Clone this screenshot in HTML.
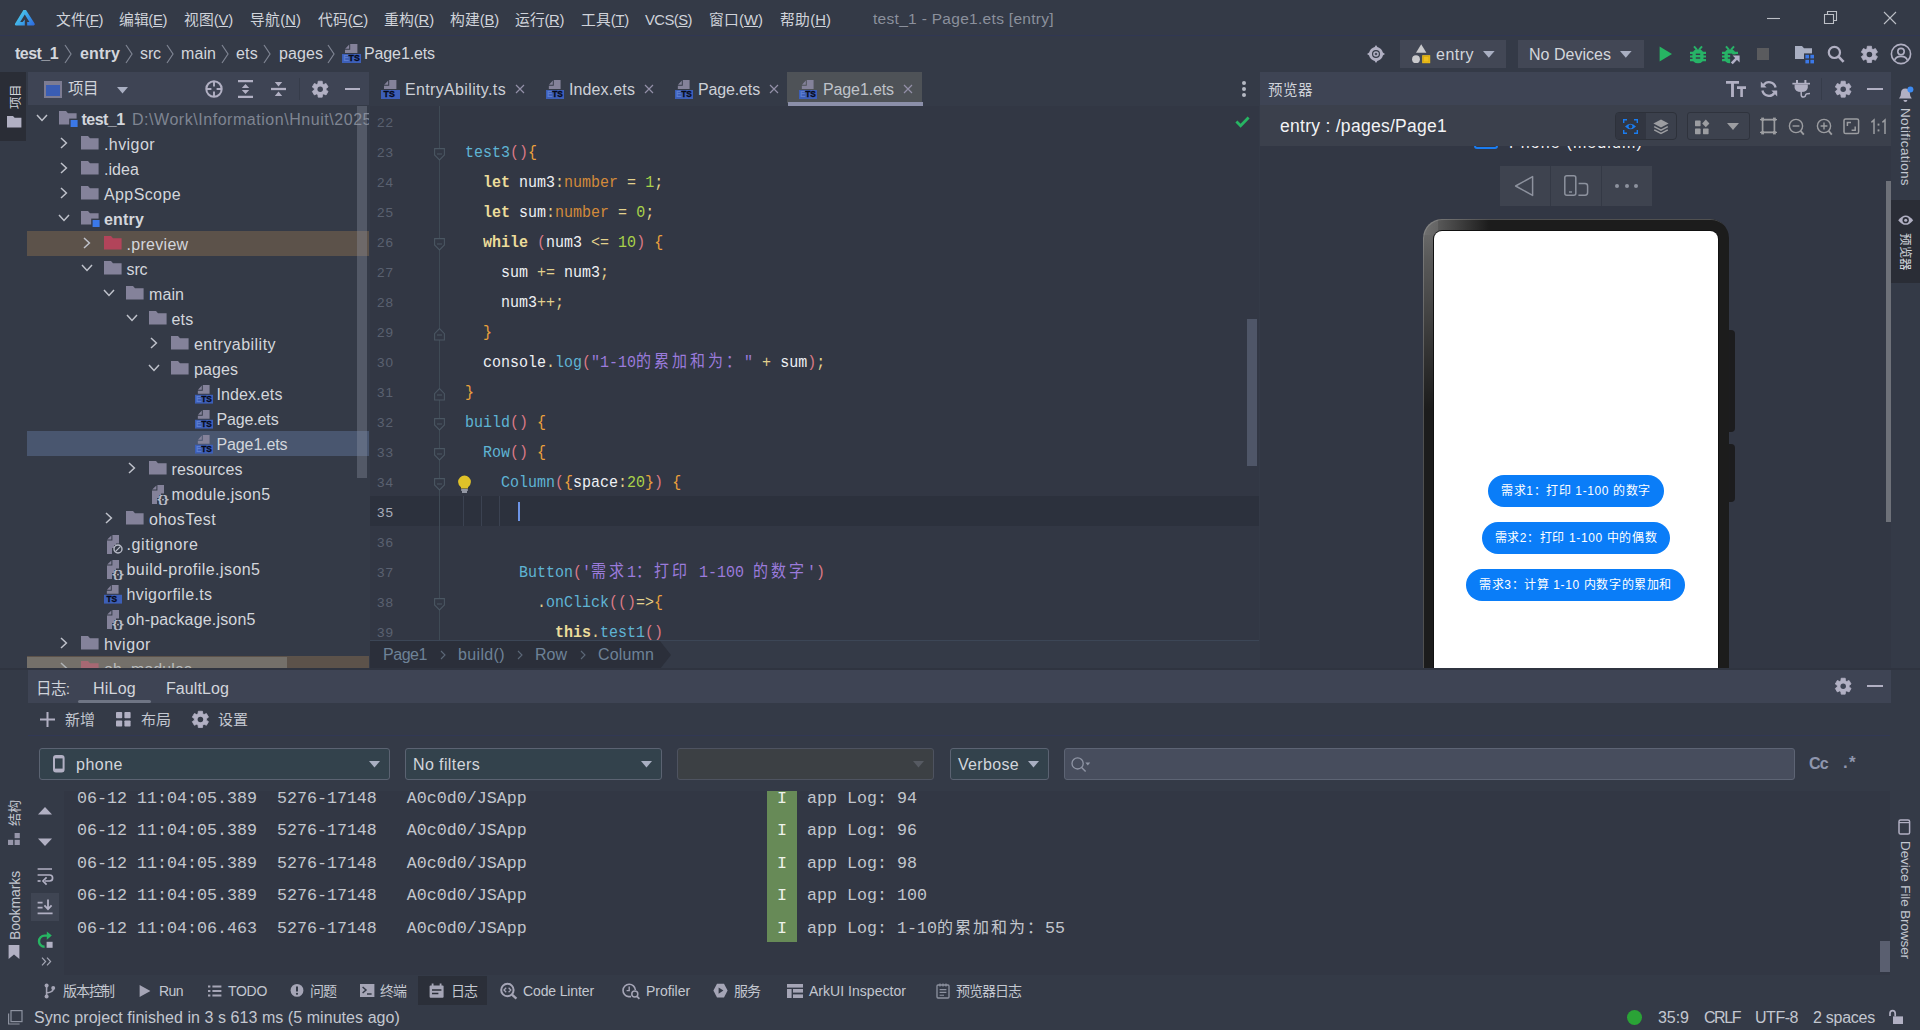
<!DOCTYPE html>
<html lang="zh-CN"><head><meta charset="utf-8"><title>test_1 - Page1.ets [entry]</title>
<style>
*{box-sizing:border-box;margin:0;padding:0}
html,body{width:1920px;height:1030px;overflow:hidden;background:#343a47;font-family:"Liberation Sans",sans-serif;color:#d3d6dc;font-size:16px}
.a{position:absolute}
.t{position:absolute;white-space:nowrap;line-height:20px;height:20px}
svg{position:absolute;overflow:visible}
.clip{position:absolute;overflow:hidden}
.m{font-family:"Liberation Mono",monospace}
.cj{font-size:15px;letter-spacing:3px}
.cj2{font-size:16px;letter-spacing:2px}
</style></head><body>
<div class="a" style="left:0px;top:0px;width:1920px;height:36px;background:#343a47;"></div>
<div class="a" style="left:0px;top:35px;width:1920px;height:1px;background:#303753;"></div>
<svg style="left:14px;top:9px;" width="22" height="18" viewBox="0 0 22 18" preserveAspectRatio="none"><defs><linearGradient id="lg1" x1="0" y1="0.2" x2="1" y2="0.8"><stop offset="0" stop-color="#52d6e8"/><stop offset="0.55" stop-color="#3aa0e8"/><stop offset="1" stop-color="#2f6fe0"/></linearGradient></defs>
<path d="M9.4 1L12 1L20.6 14.6Q21.4 16.4 19.6 16.4L13.2 16.4L13.2 13L15.4 13L10.8 5.6L6.2 13L8.6 13L10.8 10.4L10.8 16.4L2 16.4Q0.4 16.4 1 14.8Z" fill="url(#lg1)"/></svg>
<div class="t " style="letter-spacing:-0.38px;left:56px;top:9.5px;font-size:14.8px;color:#d0d3da;">文件(<u>F</u>)</div>
<div class="t " style="letter-spacing:-0.35px;left:119px;top:9.5px;font-size:14.8px;color:#d0d3da;">编辑(<u>E</u>)</div>
<div class="t " style="letter-spacing:-0.15px;left:184px;top:9.5px;font-size:14.8px;color:#d0d3da;">视图(<u>V</u>)</div>
<div class="t " style="letter-spacing:0.09px;left:250px;top:9.5px;font-size:14.8px;color:#d0d3da;">导航(<u>N</u>)</div>
<div class="t " style="letter-spacing:-0.11px;left:318px;top:9.5px;font-size:14.8px;color:#d0d3da;">代码(<u>C</u>)</div>
<div class="t " style="letter-spacing:-0.11px;left:384px;top:9.5px;font-size:14.8px;color:#d0d3da;">重构(<u>R</u>)</div>
<div class="t " style="letter-spacing:-0.15px;left:450px;top:9.5px;font-size:14.8px;color:#d0d3da;">构建(<u>B</u>)</div>
<div class="t " style="letter-spacing:-0.31px;left:515px;top:9.5px;font-size:14.8px;color:#d0d3da;">运行(<u>R</u>)</div>
<div class="t " style="letter-spacing:-0.18px;left:581px;top:9.5px;font-size:14.8px;color:#d0d3da;">工具(<u>T</u>)</div>
<div class="t " style="letter-spacing:-0.53px;left:645px;top:9.5px;font-size:14.8px;color:#d0d3da;">VCS(<u>S</u>)</div>
<div class="t " style="letter-spacing:0.03px;left:709px;top:9.5px;font-size:14.8px;color:#d0d3da;">窗口(<u>W</u>)</div>
<div class="t " style="letter-spacing:0.09px;left:780px;top:9.5px;font-size:14.8px;color:#d0d3da;">帮助(<u>H</u>)</div>
<div class="t " style="letter-spacing:0.30px;left:873px;top:9px;font-size:15.5px;color:#8b909c;">test_1 - Page1.ets [entry]</div>
<svg style="left:1766px;top:10px;" width="16" height="16" viewBox="0 0 16 16" preserveAspectRatio="none"><path d="M1 8.5H14" stroke="#bcbfc6" stroke-width="1.1" fill="none"/></svg>
<svg style="left:1823px;top:10px;" width="16" height="16" viewBox="0 0 16 16" preserveAspectRatio="none"><path d="M1.5 4.5H10.5V13.5H1.5Z M4.5 4.5V1.5H13.5V10.5H10.5" stroke="#bcbfc6" stroke-width="1.1" fill="none"/></svg>
<svg style="left:1882px;top:10px;" width="16" height="16" viewBox="0 0 16 16" preserveAspectRatio="none"><path d="M2 2L14 14M14 2L2 14" stroke="#bcbfc6" stroke-width="1.1" fill="none"/></svg>
<div class="a" style="left:0px;top:36px;width:1920px;height:36px;background:#343a47;"></div>
<div class="t " style="letter-spacing:-0.54px;left:15px;top:44px;font-size:16px;color:#d3d6dc;font-weight:bold;">test_1</div>
<svg style="left:63px;top:44px;" width="10" height="20" viewBox="0 0 10 20" preserveAspectRatio="none"><path d="M2 1L8 10L2 19" stroke="#7e8492" stroke-width="1.2" fill="none"/></svg>
<div class="t " style="letter-spacing:0.17px;left:80px;top:44px;font-size:16px;color:#d3d6dc;font-weight:bold;">entry</div>
<svg style="left:124px;top:44px;" width="10" height="20" viewBox="0 0 10 20" preserveAspectRatio="none"><path d="M2 1L8 10L2 19" stroke="#7e8492" stroke-width="1.2" fill="none"/></svg>
<div class="t " style="letter-spacing:-0.11px;left:140px;top:44px;font-size:16px;color:#d3d6dc;">src</div>
<svg style="left:165px;top:44px;" width="10" height="20" viewBox="0 0 10 20" preserveAspectRatio="none"><path d="M2 1L8 10L2 19" stroke="#7e8492" stroke-width="1.2" fill="none"/></svg>
<div class="t " style="letter-spacing:0.08px;left:181px;top:44px;font-size:16px;color:#d3d6dc;">main</div>
<svg style="left:220px;top:44px;" width="10" height="20" viewBox="0 0 10 20" preserveAspectRatio="none"><path d="M2 1L8 10L2 19" stroke="#7e8492" stroke-width="1.2" fill="none"/></svg>
<div class="t " style="letter-spacing:0.22px;left:236px;top:44px;font-size:16px;color:#d3d6dc;">ets</div>
<svg style="left:262px;top:44px;" width="10" height="20" viewBox="0 0 10 20" preserveAspectRatio="none"><path d="M2 1L8 10L2 19" stroke="#7e8492" stroke-width="1.2" fill="none"/></svg>
<div class="t " style="letter-spacing:0.08px;left:279px;top:44px;font-size:16px;color:#d3d6dc;">pages</div>
<svg style="left:326px;top:44px;" width="10" height="20" viewBox="0 0 10 20" preserveAspectRatio="none"><path d="M2 1L8 10L2 19" stroke="#7e8492" stroke-width="1.2" fill="none"/></svg>
<svg style="left:342px;top:44px;" width="19" height="19" viewBox="0 0 19 19" preserveAspectRatio="none"><path d="M8.2 0H15.4V9H3V5.8H8.2Z" fill="#84829a"/><path d="M3.2 4.8L7.2 0.6V4.8Z" fill="#84829a"/><rect x="0" y="10" width="19" height="9" fill="#3d5fb8"/><text x="1.2" y="17.3" font-family="Liberation Sans" font-weight="bold" font-size="8.6" fill="#5b7cd0" textLength="5">E</text><text x="6.6" y="17.4" font-family="Liberation Sans" font-weight="bold" font-size="9.6" stroke="#070a18" stroke-width="0.35" fill="#070a18" textLength="11.2" lengthAdjust="spacingAndGlyphs">TS</text></svg>
<div class="t " style="letter-spacing:-0.12px;left:364px;top:44px;font-size:16px;color:#d3d6dc;">Page1.ets</div>
<svg style="left:1367px;top:45px;" width="18" height="18" viewBox="0 0 18 18" preserveAspectRatio="none"><circle cx="9" cy="9" r="7" fill="#b1b0c3"/><path d="M9 0L11 3H7ZM9 18L11 15H7ZM0 9L3 7V11ZM18 9L15 7V11Z" fill="#b1b0c3"/><circle cx="9" cy="9" r="4" fill="#343a47"/><circle cx="9" cy="9" r="2.8" fill="#b1b0c3"/><circle cx="9" cy="9" r="1.3" fill="#4a4f60"/></svg>
<div class="a" style="left:1400px;top:40px;width:106px;height:28px;background:#424755;"></div>
<svg style="left:1411px;top:44px;" width="20" height="20" viewBox="0 0 20 20" preserveAspectRatio="none"><path d="M10.2 0.2L15.4 8.8H5Z" fill="#c9c9cc"/><circle cx="5" cy="15.2" r="3.9" fill="#c9c9cc"/><rect x="11.2" y="11.2" width="8" height="8" fill="#f0c01c"/><rect x="12.4" y="12.4" width="5.6" height="5.6" fill="none" stroke="#d8a810" stroke-width="0.8"/></svg>
<div class="t " style="letter-spacing:0.48px;left:1436px;top:45px;font-size:16px;color:#d3d6dc;">entry</div>
<svg style="left:1483px;top:51px;" width="12" height="8" viewBox="0 0 12 8" preserveAspectRatio="none"><path d="M0 0H11.6L5.8 6.8Z" fill="#a9afc2"/></svg>
<div class="a" style="left:1518px;top:40px;width:126px;height:28px;background:#424755;"></div>
<div class="t " style="letter-spacing:0.02px;left:1529px;top:45px;font-size:16px;color:#d3d6dc;">No Devices</div>
<svg style="left:1620px;top:51px;" width="12" height="8" viewBox="0 0 12 8" preserveAspectRatio="none"><path d="M0 0H11.6L5.8 6.8Z" fill="#a9afc2"/></svg>
<svg style="left:1659px;top:46px;" width="14" height="16" viewBox="0 0 14 16" preserveAspectRatio="none"><path d="M0.6 0.6L13 8L0.6 15.4Z" fill="#27b563"/></svg>
<svg style="left:1690px;top:46px;" width="18" height="18" viewBox="0 0 18 18" preserveAspectRatio="none"><path d="M2.4 9Q2.4 3.2 8 3.2Q13.6 3.2 13.6 9V11.4Q13.6 17.2 8 17.2Q2.4 17.2 2.4 11.4Z" fill="#27b367"/><path d="M4 0.4L6.8 3.6M12 0.4L9.2 3.6" stroke="#27b367" stroke-width="2" fill="none"/><path d="M0 6.9H16M0 10.5H16M0 14.1H16" stroke="#27b367" stroke-width="2.1" fill="none"/><rect x="5.8" y="7.6" width="4.4" height="1.4" fill="#343a47"/><rect x="5.8" y="11.3" width="4.4" height="1.4" fill="#343a47"/></svg>
<svg style="left:1722px;top:46px;" width="18" height="18" viewBox="0 0 18 18" preserveAspectRatio="none"><path d="M2.4 9Q2.4 3.2 8 3.2Q13.6 3.2 13.6 9V11.4Q13.6 17.2 8 17.2Q2.4 17.2 2.4 11.4Z" fill="#27b367"/><path d="M4 0.4L6.8 3.6M12 0.4L9.2 3.6" stroke="#27b367" stroke-width="2" fill="none"/><path d="M0 6.9H16M0 10.5H16M0 14.1H16" stroke="#27b367" stroke-width="2.1" fill="none"/><rect x="5.8" y="7.6" width="4.4" height="1.4" fill="#343a47"/><rect x="5.8" y="11.3" width="4.4" height="1.4" fill="#343a47"/><path d="M8.2 8.4H18V18.4H8.2Z" fill="#343a47"/><path d="M9.8 17.4L15.6 11.4" stroke="#b3b1c8" stroke-width="2.6" fill="none"/><path d="M10.6 9.6H17.6V16.6Z" fill="#b3b1c8"/></svg>
<div class="a" style="left:1757px;top:48px;width:12px;height:12px;background:#5a5b5e;"></div>
<svg style="left:1795px;top:46px;" width="20" height="17" viewBox="0 0 20 17" preserveAspectRatio="none"><path d="M0 0H7L9 2.2H17V13H0Z" fill="#a9afc2"/><rect x="9" y="7.4" width="10.6" height="10.6" fill="#343a47"/><rect x="10.4" y="8.8" width="3.6" height="3.6" fill="#3b78e8"/><rect x="15.4" y="8.8" width="3.6" height="3.6" fill="#3b78e8"/><rect x="10.4" y="13.8" width="3.6" height="3.6" fill="#3b78e8"/><rect x="15.4" y="13.8" width="3.6" height="3.6" fill="#3b78e8"/></svg>
<svg style="left:1827px;top:45px;" width="18" height="18" viewBox="0 0 18 18" preserveAspectRatio="none"><circle cx="7.4" cy="7.4" r="5.6" fill="none" stroke="#b1b0c3" stroke-width="2.2"/><path d="M11.6 11.6L16.6 16.8" stroke="#b1b0c3" stroke-width="2.6"/></svg>
<svg style="left:1860.6px;top:45.6px;" width="16.8" height="16.8" viewBox="0 0 16.8 16.8" preserveAspectRatio="none"><g transform="translate(8.4,8.4)"><path d="M-2.36 -5.57 L-2.08 -8.14 L2.08 -8.14 L2.36 -5.57 L3.65 -4.82 L6.01 -5.87 L8.09 -2.27 L6.00 -0.75 L6.00 0.75 L8.09 2.27 L6.01 5.87 L3.65 4.82 L2.36 5.57 L2.08 8.14 L-2.08 8.14 L-2.36 5.57 L-3.65 4.82 L-6.01 5.87 L-8.09 2.27 L-6.00 0.75 L-6.00 -0.75 L-8.09 -2.27 L-6.01 -5.87 L-3.65 -4.82Z" fill="#b1b0c3" stroke="#b1b0c3" stroke-width="0.8" stroke-linejoin="round"/><circle r="2.77" fill="#343a47"/></g></svg>
<svg style="left:1890px;top:43px;" width="22" height="22" viewBox="0 0 22 22" preserveAspectRatio="none"><circle cx="11" cy="11" r="9.6" fill="none" stroke="#b1b0c3" stroke-width="1.6"/><circle cx="11" cy="8.6" r="3.2" fill="none" stroke="#b1b0c3" stroke-width="1.6"/><path d="M4.6 17.6Q5.4 13.4 11 13.4Q16.6 13.4 17.4 17.6" fill="none" stroke="#b1b0c3" stroke-width="1.6"/></svg>
<div class="a" style="left:0px;top:72px;width:27px;height:933px;background:#343a47;"></div>
<div class="a" style="left:0px;top:72px;width:26px;height:69px;background:#2a2d36;"></div>
<div class="a" style="left:16px;top:109px;width:0;height:0"><div class="t" style="letter-spacing:-0.50px;left:0;top:-10px;font-size:12.5px;color:#d0d3da;transform-origin:0 10px;transform:rotate(-90deg);">项目</div></div>
<svg style="left:7px;top:116px;" width="15" height="12" viewBox="0 0 15 12" preserveAspectRatio="none"><path d="M0 0H6L7.6 1.8H14.4V11.4H0Z" fill="#b1b0c3"/></svg>
<div class="a" style="left:28px;top:72px;width:341px;height:33px;background:#3e4454;"></div>
<svg style="left:44px;top:81px;" width="18" height="17" viewBox="0 0 18 17" preserveAspectRatio="none"><rect x="0" y="0" width="18" height="17" fill="#7d7c92"/><rect x="2" y="4" width="14" height="11" fill="#3a5db4"/></svg>
<div class="t " style="letter-spacing:-1.50px;left:68px;top:79px;font-size:15.5px;color:#d0d3da;">项目</div>
<svg style="left:117px;top:87px;" width="12" height="8" viewBox="0 0 12 8" preserveAspectRatio="none"><path d="M0 0H11L5.5 6.6Z" fill="#a9afc2"/></svg>
<svg style="left:205px;top:80px;" width="18" height="18" viewBox="0 0 18 18" preserveAspectRatio="none"><circle cx="9" cy="9" r="7.7" fill="none" stroke="#b1b0c3" stroke-width="2"/><path d="M9 1V6.4M9 11.6V17M1 9H6.4M11.6 9H17" stroke="#b1b0c3" stroke-width="1.9"/></svg>
<svg style="left:238px;top:80px;" width="16" height="18" viewBox="0 0 16 18" preserveAspectRatio="none"><path d="M0 1.2H15M0 16.8H15" stroke="#b1b0c3" stroke-width="2.3"/><path d="M7.5 4L11.2 8H3.8Z M7.5 14L11.2 10H3.8Z" fill="#b1b0c3"/></svg>
<svg style="left:271px;top:80px;" width="16" height="18" viewBox="0 0 16 18" preserveAspectRatio="none"><path d="M0 9H15" stroke="#b1b0c3" stroke-width="2.3"/><path d="M7.5 6.4L11.2 2H3.8Z M7.5 11.6L11.2 16H3.8Z" fill="#b1b0c3"/></svg>
<div class="a" style="left:299px;top:78px;width:1px;height:22px;background:#363c4a;"></div>
<svg style="left:311.8px;top:80.8px;" width="16.4" height="16.4" viewBox="0 0 16.4 16.4" preserveAspectRatio="none"><g transform="translate(8.2,8.2)"><path d="M-2.30 -5.44 L-2.03 -7.95 L2.03 -7.95 L2.30 -5.44 L3.56 -4.71 L5.87 -5.73 L7.89 -2.22 L5.86 -0.73 L5.86 0.73 L7.89 2.22 L5.87 5.73 L3.56 4.71 L2.30 5.44 L2.03 7.95 L-2.03 7.95 L-2.30 5.44 L-3.56 4.71 L-5.87 5.73 L-7.89 2.22 L-5.86 0.73 L-5.86 -0.73 L-7.89 -2.22 L-5.87 -5.73 L-3.56 -4.71Z" fill="#b1b0c3" stroke="#b1b0c3" stroke-width="0.8" stroke-linejoin="round"/><circle r="2.71" fill="#3e4454"/></g></svg>
<div class="a" style="left:345px;top:88px;width:15px;height:2px;background:#b1b0c3;"></div>
<div class="clip" style="left:27px;top:106px;width:342px;height:562px;background:#343a47">
<svg style="left:8.5px;top:8px;" width="12" height="8" viewBox="0 0 12 8" preserveAspectRatio="none"><path d="M1 1L6 6.4L11 1" stroke="#bfc2cb" stroke-width="1.5" fill="none"/></svg>
<svg style="left:31.5px;top:5.4px;" width="18" height="14" viewBox="0 0 18 14" preserveAspectRatio="none"><path d="M0 0H7L9 2.2H17.6V13.4H0Z" fill="#84829a"/><rect x="10.2" y="7.6" width="9" height="9" fill="#343a47"/><rect x="11.6" y="9" width="7" height="7" fill="#3b78e8"/></svg>
<div class="t " style="letter-spacing:-0.54px;left:54.5px;top:4px;font-size:16px;color:#d3d6dc;font-weight:bold;">test_1</div>
<div class="t " style="letter-spacing:0.54px;left:105px;top:4px;font-size:16px;color:#7f8592;">D:\Work\Information\Hnuit\2025</div>
<svg style="left:33.0px;top:31px;" width="8" height="12" viewBox="0 0 8 12" preserveAspectRatio="none"><path d="M1 1L6.4 6L1 11" stroke="#bfc2cb" stroke-width="1.5" fill="none"/></svg>
<svg style="left:54.0px;top:30.4px;" width="18" height="14" viewBox="0 0 18 14" preserveAspectRatio="none"><path d="M0 0H7L9 2.2H17.6V13.4H0Z" fill="#84829a"/></svg>
<div class="t " style="letter-spacing:0.42px;left:77.0px;top:29px;font-size:16px;color:#d3d6dc;">.hvigor</div>
<svg style="left:33.0px;top:56px;" width="8" height="12" viewBox="0 0 8 12" preserveAspectRatio="none"><path d="M1 1L6.4 6L1 11" stroke="#bfc2cb" stroke-width="1.5" fill="none"/></svg>
<svg style="left:54.0px;top:55.4px;" width="18" height="14" viewBox="0 0 18 14" preserveAspectRatio="none"><path d="M0 0H7L9 2.2H17.6V13.4H0Z" fill="#84829a"/></svg>
<div class="t " style="letter-spacing:0.06px;left:77.0px;top:54px;font-size:16px;color:#d3d6dc;">.idea</div>
<svg style="left:33.0px;top:81px;" width="8" height="12" viewBox="0 0 8 12" preserveAspectRatio="none"><path d="M1 1L6.4 6L1 11" stroke="#bfc2cb" stroke-width="1.5" fill="none"/></svg>
<svg style="left:54.0px;top:80.4px;" width="18" height="14" viewBox="0 0 18 14" preserveAspectRatio="none"><path d="M0 0H7L9 2.2H17.6V13.4H0Z" fill="#84829a"/></svg>
<div class="t " style="letter-spacing:0.39px;left:77.0px;top:79px;font-size:16px;color:#d3d6dc;">AppScope</div>
<svg style="left:31.0px;top:108px;" width="12" height="8" viewBox="0 0 12 8" preserveAspectRatio="none"><path d="M1 1L6 6.4L11 1" stroke="#bfc2cb" stroke-width="1.5" fill="none"/></svg>
<svg style="left:54.0px;top:105.4px;" width="18" height="14" viewBox="0 0 18 14" preserveAspectRatio="none"><path d="M0 0H7L9 2.2H17.6V13.4H0Z" fill="#84829a"/><rect x="10.2" y="7.6" width="9" height="9" fill="#343a47"/><rect x="11.6" y="9" width="7" height="7" fill="#3b78e8"/></svg>
<div class="t " style="letter-spacing:0.17px;left:77.0px;top:104px;font-size:16px;color:#d3d6dc;font-weight:bold;">entry</div>
<div class="a" style="left:0px;top:125px;width:342px;height:25px;background:#5c524a;"></div>
<svg style="left:55.5px;top:131px;" width="8" height="12" viewBox="0 0 8 12" preserveAspectRatio="none"><path d="M1 1L6.4 6L1 11" stroke="#bfc2cb" stroke-width="1.5" fill="none"/></svg>
<svg style="left:76.5px;top:130.4px;" width="18" height="14" viewBox="0 0 18 14" preserveAspectRatio="none"><path d="M0 0H7L9 2.2H17.6V13.4H0Z" fill="#b2445a"/></svg>
<div class="t " style="letter-spacing:0.30px;left:99.5px;top:129px;font-size:16px;color:#d3d6dc;">.preview</div>
<svg style="left:53.5px;top:158px;" width="12" height="8" viewBox="0 0 12 8" preserveAspectRatio="none"><path d="M1 1L6 6.4L11 1" stroke="#bfc2cb" stroke-width="1.5" fill="none"/></svg>
<svg style="left:76.5px;top:155.4px;" width="18" height="14" viewBox="0 0 18 14" preserveAspectRatio="none"><path d="M0 0H7L9 2.2H17.6V13.4H0Z" fill="#84829a"/></svg>
<div class="t " style="letter-spacing:-0.11px;left:99.5px;top:154px;font-size:16px;color:#d3d6dc;">src</div>
<svg style="left:76.0px;top:183px;" width="12" height="8" viewBox="0 0 12 8" preserveAspectRatio="none"><path d="M1 1L6 6.4L11 1" stroke="#bfc2cb" stroke-width="1.5" fill="none"/></svg>
<svg style="left:99.0px;top:180.4px;" width="18" height="14" viewBox="0 0 18 14" preserveAspectRatio="none"><path d="M0 0H7L9 2.2H17.6V13.4H0Z" fill="#84829a"/></svg>
<div class="t " style="letter-spacing:0.08px;left:122.0px;top:179px;font-size:16px;color:#d3d6dc;">main</div>
<svg style="left:98.5px;top:208px;" width="12" height="8" viewBox="0 0 12 8" preserveAspectRatio="none"><path d="M1 1L6 6.4L11 1" stroke="#bfc2cb" stroke-width="1.5" fill="none"/></svg>
<svg style="left:121.5px;top:205.4px;" width="18" height="14" viewBox="0 0 18 14" preserveAspectRatio="none"><path d="M0 0H7L9 2.2H17.6V13.4H0Z" fill="#84829a"/></svg>
<div class="t " style="letter-spacing:0.22px;left:144.5px;top:204px;font-size:16px;color:#d3d6dc;">ets</div>
<svg style="left:123.0px;top:231px;" width="8" height="12" viewBox="0 0 8 12" preserveAspectRatio="none"><path d="M1 1L6.4 6L1 11" stroke="#bfc2cb" stroke-width="1.5" fill="none"/></svg>
<svg style="left:144.0px;top:230.4px;" width="18" height="14" viewBox="0 0 18 14" preserveAspectRatio="none"><path d="M0 0H7L9 2.2H17.6V13.4H0Z" fill="#84829a"/></svg>
<div class="t " style="letter-spacing:0.46px;left:167.0px;top:229px;font-size:16px;color:#d3d6dc;">entryability</div>
<svg style="left:121.0px;top:258px;" width="12" height="8" viewBox="0 0 12 8" preserveAspectRatio="none"><path d="M1 1L6 6.4L11 1" stroke="#bfc2cb" stroke-width="1.5" fill="none"/></svg>
<svg style="left:144.0px;top:255.4px;" width="18" height="14" viewBox="0 0 18 14" preserveAspectRatio="none"><path d="M0 0H7L9 2.2H17.6V13.4H0Z" fill="#84829a"/></svg>
<div class="t " style="letter-spacing:0.08px;left:167.0px;top:254px;font-size:16px;color:#d3d6dc;">pages</div>
<svg style="left:167.5px;top:279px;" width="18" height="18.6" viewBox="0 0 19 19" preserveAspectRatio="none"><path d="M8.2 0H15.4V9H3V5.8H8.2Z" fill="#84829a"/><path d="M3.2 4.8L7.2 0.6V4.8Z" fill="#84829a"/><rect x="0" y="10" width="19" height="9" fill="#3d5fb8"/><text x="1.2" y="17.3" font-family="Liberation Sans" font-weight="bold" font-size="8.6" fill="#5b7cd0" textLength="5">E</text><text x="6.6" y="17.4" font-family="Liberation Sans" font-weight="bold" font-size="9.6" stroke="#070a18" stroke-width="0.35" fill="#070a18" textLength="11.2" lengthAdjust="spacingAndGlyphs">TS</text></svg>
<div class="t " style="letter-spacing:0.12px;left:189.5px;top:279px;font-size:16px;color:#d3d6dc;">Index.ets</div>
<svg style="left:167.5px;top:304px;" width="18" height="18.6" viewBox="0 0 19 19" preserveAspectRatio="none"><path d="M8.2 0H15.4V9H3V5.8H8.2Z" fill="#84829a"/><path d="M3.2 4.8L7.2 0.6V4.8Z" fill="#84829a"/><rect x="0" y="10" width="19" height="9" fill="#3d5fb8"/><text x="1.2" y="17.3" font-family="Liberation Sans" font-weight="bold" font-size="8.6" fill="#5b7cd0" textLength="5">E</text><text x="6.6" y="17.4" font-family="Liberation Sans" font-weight="bold" font-size="9.6" stroke="#070a18" stroke-width="0.35" fill="#070a18" textLength="11.2" lengthAdjust="spacingAndGlyphs">TS</text></svg>
<div class="t " style="letter-spacing:-0.14px;left:189.5px;top:304px;font-size:16px;color:#d3d6dc;">Page.ets</div>
<div class="a" style="left:0px;top:325px;width:342px;height:25px;background:#49566f;"></div>
<svg style="left:167.5px;top:329px;" width="18" height="18.6" viewBox="0 0 19 19" preserveAspectRatio="none"><path d="M8.2 0H15.4V9H3V5.8H8.2Z" fill="#84829a"/><path d="M3.2 4.8L7.2 0.6V4.8Z" fill="#84829a"/><rect x="0" y="10" width="19" height="9" fill="#3d5fb8"/><text x="1.2" y="17.3" font-family="Liberation Sans" font-weight="bold" font-size="8.6" fill="#5b7cd0" textLength="5">E</text><text x="6.6" y="17.4" font-family="Liberation Sans" font-weight="bold" font-size="9.6" stroke="#070a18" stroke-width="0.35" fill="#070a18" textLength="11.2" lengthAdjust="spacingAndGlyphs">TS</text></svg>
<div class="t " style="letter-spacing:-0.12px;left:189.5px;top:329px;font-size:16px;color:#d3d6dc;">Page1.ets</div>
<svg style="left:100.5px;top:356px;" width="8" height="12" viewBox="0 0 8 12" preserveAspectRatio="none"><path d="M1 1L6.4 6L1 11" stroke="#bfc2cb" stroke-width="1.5" fill="none"/></svg>
<svg style="left:121.5px;top:355.4px;" width="18" height="14" viewBox="0 0 18 14" preserveAspectRatio="none"><path d="M0 0H7L9 2.2H17.6V13.4H0Z" fill="#84829a"/></svg>
<div class="t " style="letter-spacing:0.08px;left:144.5px;top:354px;font-size:16px;color:#d3d6dc;">resources</div>
<svg style="left:123.5px;top:379px;" width="18" height="19" viewBox="0 0 18 19" preserveAspectRatio="none"><path d="M6.4 0H13V8.6H10V10H8V13H6V19H1V5.6H6.4Z" fill="#84829a"/><path d="M1.2 4.6L5.4 0.4V4.6Z" fill="#84829a"/><text x="6.2" y="18.2" font-family="Liberation Sans" font-weight="bold" font-size="10.5" fill="#b9bcc8" textLength="11.5" lengthAdjust="spacingAndGlyphs">{}</text><circle cx="12" cy="14.6" r="0.9" fill="#b9bcc8"/></svg>
<div class="t " style="letter-spacing:0.32px;left:144.5px;top:379px;font-size:16px;color:#d3d6dc;">module.json5</div>
<svg style="left:78.0px;top:406px;" width="8" height="12" viewBox="0 0 8 12" preserveAspectRatio="none"><path d="M1 1L6.4 6L1 11" stroke="#bfc2cb" stroke-width="1.5" fill="none"/></svg>
<svg style="left:99.0px;top:405.4px;" width="18" height="14" viewBox="0 0 18 14" preserveAspectRatio="none"><path d="M0 0H7L9 2.2H17.6V13.4H0Z" fill="#84829a"/></svg>
<div class="t " style="letter-spacing:0.37px;left:122.0px;top:404px;font-size:16px;color:#d3d6dc;">ohosTest</div>
<svg style="left:78.5px;top:429px;" width="18" height="19" viewBox="0 0 18 19" preserveAspectRatio="none"><path d="M6.4 0H13V8.6H10V10H8V13H6V19H1V5.6H6.4Z" fill="#84829a"/><path d="M1.2 4.6L5.4 0.4V4.6Z" fill="#84829a"/><circle cx="12" cy="14" r="4" fill="none" stroke="#b9bcc8" stroke-width="1.4"/><path d="M9.4 16.6L14.6 11.4" stroke="#b9bcc8" stroke-width="1.3"/></svg>
<div class="t " style="letter-spacing:0.62px;left:99.5px;top:429px;font-size:16px;color:#d3d6dc;">.gitignore</div>
<svg style="left:78.5px;top:454px;" width="18" height="19" viewBox="0 0 18 19" preserveAspectRatio="none"><path d="M6.4 0H13V8.6H10V10H8V13H6V19H1V5.6H6.4Z" fill="#84829a"/><path d="M1.2 4.6L5.4 0.4V4.6Z" fill="#84829a"/><text x="6.2" y="18.2" font-family="Liberation Sans" font-weight="bold" font-size="10.5" fill="#b9bcc8" textLength="11.5" lengthAdjust="spacingAndGlyphs">{}</text><circle cx="12" cy="14.6" r="0.9" fill="#b9bcc8"/></svg>
<div class="t " style="letter-spacing:0.45px;left:99.5px;top:454px;font-size:16px;color:#d3d6dc;">build-profile.json5</div>
<svg style="left:76.5px;top:479px;" width="18" height="18.6" viewBox="0 0 19 19" preserveAspectRatio="none"><path d="M8.2 0H15.4V9H3V5.8H8.2Z" fill="#84829a"/><path d="M3.2 4.8L7.2 0.6V4.8Z" fill="#84829a"/><rect x="0" y="10" width="19" height="9" fill="#3d5fb8"/><text x="2.6" y="17.4" font-family="Liberation Sans" font-weight="bold" font-size="9.6" stroke="#070a18" stroke-width="0.35" fill="#070a18" textLength="11.2" lengthAdjust="spacingAndGlyphs">TS</text></svg>
<div class="t " style="letter-spacing:0.39px;left:99.5px;top:479px;font-size:16px;color:#d3d6dc;">hvigorfile.ts</div>
<svg style="left:78.5px;top:504px;" width="18" height="19" viewBox="0 0 18 19" preserveAspectRatio="none"><path d="M6.4 0H13V8.6H10V10H8V13H6V19H1V5.6H6.4Z" fill="#84829a"/><path d="M1.2 4.6L5.4 0.4V4.6Z" fill="#84829a"/><text x="6.2" y="18.2" font-family="Liberation Sans" font-weight="bold" font-size="10.5" fill="#b9bcc8" textLength="11.5" lengthAdjust="spacingAndGlyphs">{}</text><circle cx="12" cy="14.6" r="0.9" fill="#b9bcc8"/></svg>
<div class="t " style="letter-spacing:0.17px;left:99.5px;top:504px;font-size:16px;color:#d3d6dc;">oh-package.json5</div>
<svg style="left:33.0px;top:531px;" width="8" height="12" viewBox="0 0 8 12" preserveAspectRatio="none"><path d="M1 1L6.4 6L1 11" stroke="#bfc2cb" stroke-width="1.5" fill="none"/></svg>
<svg style="left:54.0px;top:530.4px;" width="18" height="14" viewBox="0 0 18 14" preserveAspectRatio="none"><path d="M0 0H7L9 2.2H17.6V13.4H0Z" fill="#84829a"/></svg>
<div class="t " style="letter-spacing:0.57px;left:77.0px;top:529px;font-size:16px;color:#d3d6dc;">hvigor</div>
<div class="a" style="left:0px;top:550px;width:342px;height:25px;background:#5c524a;"></div>
<svg style="left:33.0px;top:556px;" width="8" height="12" viewBox="0 0 8 12" preserveAspectRatio="none"><path d="M1 1L6.4 6L1 11" stroke="#bfc2cb" stroke-width="1.5" fill="none"/></svg>
<svg style="left:54.0px;top:555.4px;" width="18" height="14" viewBox="0 0 18 14" preserveAspectRatio="none"><path d="M0 0H7L9 2.2H17.6V13.4H0Z" fill="#b2445a"/></svg>
<div class="t " style="letter-spacing:0.08px;left:77.0px;top:554px;font-size:16px;color:#d3d6dc;">oh_modules</div>
<div class="a" style="left:330px;top:0px;width:10px;height:372px;background:rgba(150,155,170,0.32);"></div>
<div class="a" style="left:0px;top:551px;width:260px;height:11px;background:rgba(150,155,150,0.42);"></div>
</div>
<div class="a" style="left:370px;top:72px;width:889px;height:34px;background:#343a47;"></div>
<div class="a" style="left:787px;top:72px;width:135px;height:31px;background:#4e5257;"></div>
<div class="a" style="left:788px;top:102px;width:135px;height:4px;background:#8b8fa9;"></div>
<svg style="left:381px;top:80px;" width="19" height="19" viewBox="0 0 19 19" preserveAspectRatio="none"><path d="M8.2 0H15.4V9H3V5.8H8.2Z" fill="#84829a"/><path d="M3.2 4.8L7.2 0.6V4.8Z" fill="#84829a"/><rect x="0" y="10" width="19" height="9" fill="#3d5fb8"/><text x="2.6" y="17.4" font-family="Liberation Sans" font-weight="bold" font-size="9.6" stroke="#070a18" stroke-width="0.35" fill="#070a18" textLength="11.2" lengthAdjust="spacingAndGlyphs">TS</text></svg>
<div class="t " style="letter-spacing:0.35px;left:405px;top:80px;font-size:16px;color:#cdd0d7;">EntryAbility.ts</div>
<svg style="left:515px;top:84px;" width="10" height="10" viewBox="0 0 10 10" preserveAspectRatio="none"><path d="M1 1L9 9M9 1L1 9" stroke="#938fa8" stroke-width="1.2" fill="none"/></svg>
<svg style="left:546px;top:80px;" width="18" height="19" viewBox="0 0 19 19" preserveAspectRatio="none"><path d="M8.2 0H15.4V9H3V5.8H8.2Z" fill="#84829a"/><path d="M3.2 4.8L7.2 0.6V4.8Z" fill="#84829a"/><rect x="0" y="10" width="19" height="9" fill="#3d5fb8"/><text x="1.2" y="17.3" font-family="Liberation Sans" font-weight="bold" font-size="8.6" fill="#5b7cd0" textLength="5">E</text><text x="6.6" y="17.4" font-family="Liberation Sans" font-weight="bold" font-size="9.6" stroke="#070a18" stroke-width="0.35" fill="#070a18" textLength="11.2" lengthAdjust="spacingAndGlyphs">TS</text></svg>
<div class="t " style="letter-spacing:0.12px;left:569px;top:80px;font-size:16px;color:#cdd0d7;">Index.ets</div>
<svg style="left:644px;top:84px;" width="10" height="10" viewBox="0 0 10 10" preserveAspectRatio="none"><path d="M1 1L9 9M9 1L1 9" stroke="#938fa8" stroke-width="1.2" fill="none"/></svg>
<svg style="left:675px;top:80px;" width="18" height="19" viewBox="0 0 19 19" preserveAspectRatio="none"><path d="M8.2 0H15.4V9H3V5.8H8.2Z" fill="#84829a"/><path d="M3.2 4.8L7.2 0.6V4.8Z" fill="#84829a"/><rect x="0" y="10" width="19" height="9" fill="#3d5fb8"/><text x="1.2" y="17.3" font-family="Liberation Sans" font-weight="bold" font-size="8.6" fill="#5b7cd0" textLength="5">E</text><text x="6.6" y="17.4" font-family="Liberation Sans" font-weight="bold" font-size="9.6" stroke="#070a18" stroke-width="0.35" fill="#070a18" textLength="11.2" lengthAdjust="spacingAndGlyphs">TS</text></svg>
<div class="t " style="letter-spacing:-0.14px;left:698px;top:80px;font-size:16px;color:#cdd0d7;">Page.ets</div>
<svg style="left:769px;top:84px;" width="10" height="10" viewBox="0 0 10 10" preserveAspectRatio="none"><path d="M1 1L9 9M9 1L1 9" stroke="#938fa8" stroke-width="1.2" fill="none"/></svg>
<svg style="left:799px;top:80px;" width="18" height="19" viewBox="0 0 19 19" preserveAspectRatio="none"><path d="M8.2 0H15.4V9H3V5.8H8.2Z" fill="#84829a"/><path d="M3.2 4.8L7.2 0.6V4.8Z" fill="#84829a"/><rect x="0" y="10" width="19" height="9" fill="#3d5fb8"/><text x="1.2" y="17.3" font-family="Liberation Sans" font-weight="bold" font-size="8.6" fill="#5b7cd0" textLength="5">E</text><text x="6.6" y="17.4" font-family="Liberation Sans" font-weight="bold" font-size="9.6" stroke="#070a18" stroke-width="0.35" fill="#070a18" textLength="11.2" lengthAdjust="spacingAndGlyphs">TS</text></svg>
<div class="t " style="letter-spacing:-0.12px;left:823px;top:80px;font-size:16px;color:#bfc2c9;">Page1.ets</div>
<svg style="left:903px;top:84px;" width="10" height="10" viewBox="0 0 10 10" preserveAspectRatio="none"><path d="M1 1L9 9M9 1L1 9" stroke="#938fa8" stroke-width="1.2" fill="none"/></svg>
<div class="a" style="left:1242px;top:81px;width:4px;height:4px;border-radius:2px;background:#b4b8c2"></div>
<div class="a" style="left:1242px;top:87px;width:4px;height:4px;border-radius:2px;background:#b4b8c2"></div>
<div class="a" style="left:1242px;top:93px;width:4px;height:4px;border-radius:2px;background:#b4b8c2"></div>
<div class="clip" style="left:370px;top:106px;width:889px;height:534px;background:#323744">
<div class="a" style="left:0px;top:390px;width:889px;height:30px;background:#2c313d;"></div>
<div class="a" style="left:69px;top:0px;width:1px;height:534px;background:#3f4a55;"></div>
<div class="a" style="left:93px;top:390px;width:1px;height:30px;background:#3b4251;"></div>
<div class="a" style="left:111px;top:390px;width:1px;height:30px;background:#3b4251;"></div>
<div class="a" style="left:129px;top:390px;width:1px;height:30px;background:#3b4251;"></div>
<div class="t " style="letter-spacing:0.98px;left:7px;top:7px;font-size:13.5px;color:#5a6170;">22</div>
<div class="t " style="letter-spacing:0.98px;left:7px;top:37px;font-size:13.5px;color:#5a6170;">23</div>
<div class="t " style="letter-spacing:0.98px;left:7px;top:67px;font-size:13.5px;color:#5a6170;">24</div>
<div class="t " style="letter-spacing:0.98px;left:7px;top:97px;font-size:13.5px;color:#5a6170;">25</div>
<div class="t " style="letter-spacing:0.98px;left:7px;top:127px;font-size:13.5px;color:#5a6170;">26</div>
<div class="t " style="letter-spacing:0.98px;left:7px;top:157px;font-size:13.5px;color:#5a6170;">27</div>
<div class="t " style="letter-spacing:0.98px;left:7px;top:187px;font-size:13.5px;color:#5a6170;">28</div>
<div class="t " style="letter-spacing:0.98px;left:7px;top:217px;font-size:13.5px;color:#5a6170;">29</div>
<div class="t " style="letter-spacing:0.98px;left:7px;top:247px;font-size:13.5px;color:#5a6170;">30</div>
<div class="t " style="letter-spacing:0.98px;left:7px;top:277px;font-size:13.5px;color:#5a6170;">31</div>
<div class="t " style="letter-spacing:0.98px;left:7px;top:307px;font-size:13.5px;color:#5a6170;">32</div>
<div class="t " style="letter-spacing:0.98px;left:7px;top:337px;font-size:13.5px;color:#5a6170;">33</div>
<div class="t " style="letter-spacing:0.98px;left:7px;top:367px;font-size:13.5px;color:#5a6170;">34</div>
<div class="t " style="letter-spacing:0.98px;left:7px;top:397px;font-size:13.5px;color:#a9aebb;">35</div>
<div class="t " style="letter-spacing:0.98px;left:7px;top:427px;font-size:13.5px;color:#5a6170;">36</div>
<div class="t " style="letter-spacing:0.98px;left:7px;top:457px;font-size:13.5px;color:#5a6170;">37</div>
<div class="t " style="letter-spacing:0.98px;left:7px;top:487px;font-size:13.5px;color:#5a6170;">38</div>
<div class="t " style="letter-spacing:0.98px;left:7px;top:517px;font-size:13.5px;color:#5a6170;">39</div>
<svg style="left:64px;top:42px;" width="11" height="13" viewBox="0 0 11 13" preserveAspectRatio="none"><path d="M0.6 0.6H10.4V7L5.5 12L0.6 7Z" fill="#323744" stroke="#4a5662" stroke-width="1.1"/><path d="M3 6H8" stroke="#4a5662" stroke-width="1.1"/></svg>
<svg style="left:64px;top:132px;" width="11" height="13" viewBox="0 0 11 13" preserveAspectRatio="none"><path d="M0.6 0.6H10.4V7L5.5 12L0.6 7Z" fill="#323744" stroke="#4a5662" stroke-width="1.1"/><path d="M3 6H8" stroke="#4a5662" stroke-width="1.1"/></svg>
<svg style="left:64px;top:222px;" width="11" height="13" viewBox="0 0 11 13" preserveAspectRatio="none"><path d="M0.6 12H10.4V5.6L5.5 0.6L0.6 5.6Z" fill="#323744" stroke="#4a5662" stroke-width="1.1"/><path d="M3 7H8" stroke="#4a5662" stroke-width="1.1"/></svg>
<svg style="left:64px;top:282px;" width="11" height="13" viewBox="0 0 11 13" preserveAspectRatio="none"><path d="M0.6 12H10.4V5.6L5.5 0.6L0.6 5.6Z" fill="#323744" stroke="#4a5662" stroke-width="1.1"/><path d="M3 7H8" stroke="#4a5662" stroke-width="1.1"/></svg>
<svg style="left:64px;top:312px;" width="11" height="13" viewBox="0 0 11 13" preserveAspectRatio="none"><path d="M0.6 0.6H10.4V7L5.5 12L0.6 7Z" fill="#323744" stroke="#4a5662" stroke-width="1.1"/><path d="M3 6H8" stroke="#4a5662" stroke-width="1.1"/></svg>
<svg style="left:64px;top:342px;" width="11" height="13" viewBox="0 0 11 13" preserveAspectRatio="none"><path d="M0.6 0.6H10.4V7L5.5 12L0.6 7Z" fill="#323744" stroke="#4a5662" stroke-width="1.1"/><path d="M3 6H8" stroke="#4a5662" stroke-width="1.1"/></svg>
<svg style="left:64px;top:372px;" width="11" height="13" viewBox="0 0 11 13" preserveAspectRatio="none"><path d="M0.6 0.6H10.4V7L5.5 12L0.6 7Z" fill="#323744" stroke="#4a5662" stroke-width="1.1"/><path d="M3 6H8" stroke="#4a5662" stroke-width="1.1"/></svg>
<svg style="left:64px;top:492px;" width="11" height="13" viewBox="0 0 11 13" preserveAspectRatio="none"><path d="M0.6 0.6H10.4V7L5.5 12L0.6 7Z" fill="#323744" stroke="#4a5662" stroke-width="1.1"/><path d="M3 6H8" stroke="#4a5662" stroke-width="1.1"/></svg>
<div class="t m" style="left:95px;top:36.5px;font-size:15px;line-height:22px;height:22px;white-space:pre;transform:scaleY(1.16);transform-origin:0 15px"><span style="color:#5fb4d4">test3</span><span style="color:#da7a86">()</span><span style="color:#eaa03c">{</span></div>
<div class="t m" style="left:113px;top:66.5px;font-size:15px;line-height:22px;height:22px;white-space:pre;transform:scaleY(1.16);transform-origin:0 15px"><span style="color:#ecdc9a;font-weight:bold">let</span> <span style="color:#eef0f4">num3</span><span style="color:#e2d08c">:</span><span style="color:#d38a3a">number</span> <span style="color:#e2d08c">=</span> <span style="color:#a9d24a">1</span><span style="color:#e2d08c">;</span></div>
<div class="t m" style="left:113px;top:96.5px;font-size:15px;line-height:22px;height:22px;white-space:pre;transform:scaleY(1.16);transform-origin:0 15px"><span style="color:#ecdc9a;font-weight:bold">let</span> <span style="color:#eef0f4">sum</span><span style="color:#e2d08c">:</span><span style="color:#d38a3a">number</span> <span style="color:#e2d08c">=</span> <span style="color:#a9d24a">0</span><span style="color:#e2d08c">;</span></div>
<div class="t m" style="left:113px;top:126.5px;font-size:15px;line-height:22px;height:22px;white-space:pre;transform:scaleY(1.16);transform-origin:0 15px"><span style="color:#ecdc9a;font-weight:bold">while</span> <span style="color:#da7a86">(</span><span style="color:#eef0f4">num3</span> <span style="color:#e2d08c">&lt;=</span> <span style="color:#a9d24a">10</span><span style="color:#da7a86">)</span> <span style="color:#eaa03c">{</span></div>
<div class="t m" style="left:131px;top:156.5px;font-size:15px;line-height:22px;height:22px;white-space:pre;transform:scaleY(1.16);transform-origin:0 15px"><span style="color:#eef0f4">sum</span> <span style="color:#e2d08c">+=</span> <span style="color:#eef0f4">num3</span><span style="color:#e2d08c">;</span></div>
<div class="t m" style="left:131px;top:186.5px;font-size:15px;line-height:22px;height:22px;white-space:pre;transform:scaleY(1.16);transform-origin:0 15px"><span style="color:#eef0f4">num3</span><span style="color:#e2d08c">++;</span></div>
<div class="t m" style="left:113px;top:216.5px;font-size:15px;line-height:22px;height:22px;white-space:pre;transform:scaleY(1.16);transform-origin:0 15px"><span style="color:#eaa03c">}</span></div>
<div class="t m" style="left:113px;top:246.5px;font-size:15px;line-height:22px;height:22px;white-space:pre;transform:scaleY(1.16);transform-origin:0 15px"><span style="color:#eef0f4">console</span><span style="color:#e2d08c">.</span><span style="color:#5fb4d4">log</span><span style="color:#da7a86">(</span><span style="color:#9b7bdc">"1-10<span class="cj">的累加和为：</span>"</span> <span style="color:#e2d08c">+</span> <span style="color:#eef0f4">sum</span><span style="color:#da7a86">)</span><span style="color:#e2d08c">;</span></div>
<div class="t m" style="left:95px;top:276.5px;font-size:15px;line-height:22px;height:22px;white-space:pre;transform:scaleY(1.16);transform-origin:0 15px"><span style="color:#eaa03c">}</span></div>
<div class="t m" style="left:95px;top:306.5px;font-size:15px;line-height:22px;height:22px;white-space:pre;transform:scaleY(1.16);transform-origin:0 15px"><span style="color:#5fb4d4">build</span><span style="color:#da7a86">()</span> <span style="color:#eaa03c">{</span></div>
<div class="t m" style="left:113px;top:336.5px;font-size:15px;line-height:22px;height:22px;white-space:pre;transform:scaleY(1.16);transform-origin:0 15px"><span style="color:#5fb4d4">Row</span><span style="color:#da7a86">()</span> <span style="color:#eaa03c">{</span></div>
<div class="t m" style="left:131px;top:366.5px;font-size:15px;line-height:22px;height:22px;white-space:pre;transform:scaleY(1.16);transform-origin:0 15px"><span style="color:#5fb4d4">Column</span><span style="color:#da7a86">(</span><span style="color:#eaa03c">{</span><span style="color:#eef0f4">space</span><span style="color:#e2d08c">:</span><span style="color:#a9d24a">20</span><span style="color:#eaa03c">}</span><span style="color:#da7a86">)</span> <span style="color:#eaa03c">{</span></div>
<div class="t m" style="left:149px;top:456.5px;font-size:15px;line-height:22px;height:22px;white-space:pre;transform:scaleY(1.16);transform-origin:0 15px"><span style="color:#5fb4d4">Button</span><span style="color:#da7a86">(</span><span style="color:#9b7bdc">'<span class="cj">需求</span>1<span class="cj">：打印</span> 1-100 <span class="cj">的数字</span>'</span><span style="color:#da7a86">)</span></div>
<div class="t m" style="left:167px;top:486.5px;font-size:15px;line-height:22px;height:22px;white-space:pre;transform:scaleY(1.16);transform-origin:0 15px"><span style="color:#e2d08c">.</span><span style="color:#5fb4d4">onClick</span><span style="color:#da7a86">(()</span><span style="color:#e2d08c">=&gt;</span><span style="color:#eaa03c">{</span></div>
<div class="t m" style="left:185px;top:516.5px;font-size:15px;line-height:22px;height:22px;white-space:pre;transform:scaleY(1.16);transform-origin:0 15px"><span style="color:#ecdc9a;font-weight:bold">this</span><span style="color:#e2d08c">.</span><span style="color:#5fb4d4">test1</span><span style="color:#da7a86">()</span></div>
<div class="a" style="left:148px;top:396px;width:2px;height:19px;background:#6d94e6;"></div>
<svg style="left:87px;top:369px;" width="15" height="19" viewBox="0 0 15 19" preserveAspectRatio="none"><path d="M7.5 0.6A6.4 6.4 0 0 1 13.9 7Q13.9 10 11 12.2V13.6H4V12.2Q1.1 10 1.1 7A6.4 6.4 0 0 1 7.5 0.6Z" fill="#e0c228"/><path d="M4.2 15H10.8M5 17H10" stroke="#b4b8c2" stroke-width="1.3"/></svg>
<div class="a" style="left:877px;top:213px;width:10px;height:147px;background:rgba(150,158,190,0.30);"></div>
<svg style="left:865px;top:10px;" width="15" height="12" viewBox="0 0 15 12" preserveAspectRatio="none"><path d="M1.4 5.6L5.6 9.8L13.6 1.6" stroke="#27b563" stroke-width="2.8" fill="none"/></svg>
</div>
<div class="a" style="left:370px;top:640px;width:889px;height:29px;background:#343a47;"></div>
<div class="a" style="left:370px;top:640px;width:889px;height:1px;background:#3c4656;"></div>
<svg style="left:370px;top:641px;" width="302" height="28" viewBox="0 0 302 28" preserveAspectRatio="none"><path d="M0 0H290L301 14L290 28H0Z" fill="#2b2f3a"/></svg>
<div class="t " style="letter-spacing:-0.45px;left:383px;top:645px;font-size:16px;color:#6e8297;">Page1</div>
<div class="t " style="letter-spacing:0.36px;left:458px;top:645px;font-size:16px;color:#6e8297;">build()</div>
<div class="t " style="letter-spacing:-0.01px;left:535px;top:645px;font-size:16px;color:#6e8297;">Row</div>
<div class="t " style="letter-spacing:0.14px;left:598px;top:645px;font-size:16px;color:#6e8297;">Column</div>
<svg style="left:440px;top:650px;" width="6" height="10" viewBox="0 0 6 10" preserveAspectRatio="none"><path d="M1 1L5 5L1 9" stroke="#5c6878" stroke-width="1.1" fill="none"/></svg>
<svg style="left:517px;top:650px;" width="6" height="10" viewBox="0 0 6 10" preserveAspectRatio="none"><path d="M1 1L5 5L1 9" stroke="#5c6878" stroke-width="1.1" fill="none"/></svg>
<svg style="left:580px;top:650px;" width="6" height="10" viewBox="0 0 6 10" preserveAspectRatio="none"><path d="M1 1L5 5L1 9" stroke="#5c6878" stroke-width="1.1" fill="none"/></svg>
<div class="a" style="left:1259px;top:72px;width:1px;height:596px;background:#343a47;"></div>
<div class="a" style="left:1260px;top:72px;width:631px;height:33px;background:#3e4454;"></div>
<div class="t " style="letter-spacing:1.00px;left:1268px;top:80px;font-size:14.5px;color:#d0d3da;">预览器</div>
<svg style="left:1726px;top:81px;" width="21" height="17" viewBox="0 0 21 17" preserveAspectRatio="none"><path d="M0 1.4H13M6.5 1.4V16" stroke="#b1b0c3" stroke-width="2.9" fill="none"/><path d="M11 6.6H20M15.6 6.6V16" stroke="#b1b0c3" stroke-width="2.6" fill="none"/></svg>
<svg style="left:1760px;top:80px;" width="18" height="18" viewBox="0 0 18 18" preserveAspectRatio="none"><path d="M15.6 7.4A6.7 6.7 0 0 0 3.6 5" stroke="#b1b0c3" stroke-width="2.3" fill="none"/><path d="M2.4 10.6A6.7 6.7 0 0 0 14.4 13" stroke="#b1b0c3" stroke-width="2.3" fill="none"/><path d="M0.8 1.6V7.4H6.6Z M17.2 16.4V10.6H11.4Z" fill="#b1b0c3"/></svg>
<svg style="left:1792px;top:79px;" width="20" height="20" viewBox="0 0 20 20" preserveAspectRatio="none"><path d="M5 1V4.4M13.4 1V4.4" stroke="#b1b0c3" stroke-width="2"/><rect x="0.4" y="3.8" width="17.6" height="1.7" fill="#b1b0c3"/><path d="M2.6 5.4H15.8V8.2Q15.8 13 9.2 13Q2.6 13 2.6 8.2Z" fill="#b1b0c3"/><path d="M9.2 12.6V15.4Q9.2 18 11.4 18Q13.4 18 13.6 16Q13.8 14.4 18 14.4" stroke="#b1b0c3" stroke-width="1.5" fill="none"/></svg>
<div class="a" style="left:1821px;top:78px;width:1px;height:22px;background:#363c4a;"></div>
<svg style="left:1834.8px;top:80.8px;" width="16.4" height="16.4" viewBox="0 0 16.4 16.4" preserveAspectRatio="none"><g transform="translate(8.2,8.2)"><path d="M-2.30 -5.44 L-2.03 -7.95 L2.03 -7.95 L2.30 -5.44 L3.56 -4.71 L5.87 -5.73 L7.89 -2.22 L5.86 -0.73 L5.86 0.73 L7.89 2.22 L5.87 5.73 L3.56 4.71 L2.30 5.44 L2.03 7.95 L-2.03 7.95 L-2.30 5.44 L-3.56 4.71 L-5.87 5.73 L-7.89 2.22 L-5.86 0.73 L-5.86 -0.73 L-7.89 -2.22 L-5.87 -5.73 L-3.56 -4.71Z" fill="#b1b0c3" stroke="#b1b0c3" stroke-width="0.8" stroke-linejoin="round"/><circle r="2.71" fill="#3e4454"/></g></svg>
<div class="a" style="left:1867px;top:88px;width:16px;height:2px;background:#b1b0c3;"></div>
<div class="a" style="left:1260px;top:105px;width:631px;height:41px;background:#3b404c;"></div>
<div class="t " style="letter-spacing:0.28px;left:1280px;top:116px;font-size:17.5px;color:#f2f3f5;">entry : /pages/Page1</div>
<div class="a" style="left:1615px;top:112px;width:62px;height:28px;border:1px solid #2d313a;border-radius:4px;background:#3b404c"></div>
<div class="a" style="left:1616px;top:113px;width:30px;height:26px;border-radius:3px 0 0 3px;background:#323641"></div>
<svg style="left:1623px;top:119px;" width="15" height="15" viewBox="0 0 15 15" preserveAspectRatio="none"><path d="M0.7 4V0.7H4M11 0.7H14.3V4M14.3 11V14.3H11M4 14.3H0.7V11" stroke="#1a7cf0" stroke-width="1.4" fill="none"/><path d="M2 7.5Q7.5 2 13 7.5Q7.5 13 2 7.5Z" fill="#1a7cf0"/><circle cx="7.5" cy="7.5" r="1.9" fill="#323641"/></svg>
<svg style="left:1653px;top:119px;" width="16" height="15" viewBox="0 0 16 15" preserveAspectRatio="none"><path d="M8 0.4L15.6 4.4L8 8.4L0.4 4.4Z" fill="#9c9da1"/><path d="M1.2 7.6L8 11.2L14.8 7.6M1.2 10.8L8 14.4L14.8 10.8" stroke="#9c9da1" stroke-width="1.5" fill="none"/></svg>
<div class="a" style="left:1687px;top:112px;width:63px;height:28px;border:1px solid #2f333d;border-radius:3px;background:#3d424e"></div>
<svg style="left:1695px;top:120px;" width="15" height="15" viewBox="0 0 15 15" preserveAspectRatio="none"><rect x="0" y="0.6" width="5.6" height="5.6" rx="0.6" fill="#9c9da1"/><rect x="0" y="8.6" width="5.6" height="5.6" rx="0.6" fill="#9c9da1"/><rect x="8" y="8.6" width="5.6" height="5.6" rx="0.6" fill="#9c9da1"/><path d="M10.8 -0.4L14.4 3.4L10.8 7.2L7.2 3.4Z" fill="#9c9da1"/></svg>
<svg style="left:1727px;top:123px;" width="13" height="8" viewBox="0 0 13 8" preserveAspectRatio="none"><path d="M0 0H12L6 7Z" fill="#9c9da1"/></svg>
<svg style="left:1760px;top:117px;" width="17" height="18" viewBox="0 0 17 18" preserveAspectRatio="none"><rect x="2.6" y="2.6" width="11.8" height="12.8" fill="none" stroke="#9c9da1" stroke-width="1.7"/><path d="M0 2.6H17M0 15.4H17" stroke="#9c9da1" stroke-width="1.2"/><rect x="1.2" y="0.6" width="2.8" height="3.2" fill="#9c9da1"/><rect x="13" y="0.6" width="2.8" height="3.2" fill="#9c9da1"/><rect x="1.2" y="14.2" width="2.8" height="3.2" fill="#9c9da1"/><rect x="13" y="14.2" width="2.8" height="3.2" fill="#9c9da1"/></svg>
<svg style="left:1788px;top:118px;" width="18" height="18" viewBox="0 0 18 18" preserveAspectRatio="none"><circle cx="8" cy="8" r="6.6" fill="none" stroke="#9c9da1" stroke-width="1.4"/><path d="M4.6 8H11.4" stroke="#9c9da1" stroke-width="1.4"/><path d="M12.6 12.8L15.8 16.6" stroke="#9c9da1" stroke-width="1.8"/></svg>
<svg style="left:1816px;top:118px;" width="18" height="18" viewBox="0 0 18 18" preserveAspectRatio="none"><circle cx="8" cy="8" r="6.6" fill="none" stroke="#9c9da1" stroke-width="1.4"/><path d="M4.6 8H11.4M8 4.6V11.4" stroke="#9c9da1" stroke-width="1.4"/><path d="M12.6 12.8L15.8 16.6" stroke="#9c9da1" stroke-width="1.8"/></svg>
<svg style="left:1843px;top:118px;" width="17" height="17" viewBox="0 0 17 17" preserveAspectRatio="none"><rect x="1" y="1" width="14.6" height="14.6" rx="1.6" fill="none" stroke="#9c9da1" stroke-width="1.5"/><path d="M4.4 8V4.4H8M12.2 8.6V12.2H8.6" fill="none" stroke="#9c9da1" stroke-width="1.5"/></svg>
<svg style="left:1871px;top:119px;" width="16" height="15" viewBox="0 0 16 15" preserveAspectRatio="none"><path d="M0.4 3.4L3 1V15M11.4 3.4L14 1V15" stroke="#9c9da1" stroke-width="1.5" fill="none"/><rect x="6.6" y="4.6" width="1.8" height="2" fill="#9c9da1"/><rect x="6.6" y="10.4" width="1.8" height="2" fill="#9c9da1"/></svg>
<div class="clip" style="left:1260px;top:146px;width:631px;height:522px;background:#323744">
<div class="clip" style="left:0;top:0;width:630px;height:8px">
<div class="a" style="left:214px;top:-12px;width:24px;height:15px;border:2px solid #1a7cf0;border-radius:3px"></div>
<div class="t " style="letter-spacing:1.12px;left:249px;top:-13px;font-size:16px;color:#f2f3f5;">Phone (medium)</div>
</div>
<div class="a" style="left:240px;top:20px;width:152px;height:40px;background:#3e434f;"></div>
<div class="a" style="left:290px;top:20px;width:1px;height:40px;background:#343945;"></div>
<div class="a" style="left:341px;top:20px;width:1px;height:40px;background:#343945;"></div>
<svg style="left:254px;top:29px;" width="22" height="22" viewBox="0 0 22 22" preserveAspectRatio="none"><path d="M18.6 1.6V20.4L1.6 11Z" fill="none" stroke="#8d929e" stroke-width="1.5" stroke-linejoin="round"/></svg>
<svg style="left:304px;top:29px;" width="26" height="22" viewBox="0 0 26 22" preserveAspectRatio="none"><rect x="0.8" y="0.8" width="11" height="19.4" rx="2" fill="none" stroke="#8d929e" stroke-width="1.5"/><path d="M5 17H8" stroke="#8d929e" stroke-width="1.4"/><path d="M14.6 8.6H21Q23.6 8.6 23.6 11V17.6Q23.6 20.2 21 20.2H14.4" fill="none" stroke="#8d929e" stroke-width="1.5"/></svg>
<div class="a" style="left:355.0px;top:38px;width:4px;height:4px;border-radius:2px;background:#8d929e"></div>
<div class="a" style="left:364.5999999999999px;top:38px;width:4px;height:4px;border-radius:2px;background:#8d929e"></div>
<div class="a" style="left:374.20000000000005px;top:38px;width:4px;height:4px;border-radius:2px;background:#8d929e"></div>
<div class="a" style="left:469px;top:184px;width:6px;height:102px;background:#1c1c1e;border-radius:0 4px 4px 0"></div>
<div class="a" style="left:469px;top:298px;width:6px;height:58px;background:#1c1c1e;border-radius:0 4px 4px 0"></div>
<div class="a" style="left:163px;top:73px;width:306px;height:470px;border-radius:19px 19px 0 0;box-shadow:inset 1px 1px 0 0 rgba(160,160,160,.4);background:linear-gradient(to right,rgba(112,112,112,1) 0,rgba(100,100,100,.85) 14px,rgba(60,60,60,0) 66px) 0 0/70px 16px no-repeat,linear-gradient(to bottom,rgba(112,112,112,1) 0,rgba(100,100,100,.85) 40px,rgba(60,60,60,0) 190px) 0 0/15px 200px no-repeat,#1c1c1c"></div>
<div class="a" style="left:174px;top:85px;width:284px;height:460px;border-radius:8px 8px 0 0;background:#fff;box-shadow:0 0 0 1px #111"></div>
<div class="a" style="left:228px;top:329px;width:176px;height:32px;border-radius:16px;background:#0a7df8"></div>
<div class="t " style="letter-spacing:0.62px;left:241.0px;top:335.0px;font-size:12px;color:#fff;font-weight:500;">需求1：打印 1-100 的数字</div>
<div class="a" style="left:222px;top:376px;width:188px;height:32px;border-radius:16px;background:#0a7df8"></div>
<div class="t " style="letter-spacing:0.64px;left:234.5px;top:382.0px;font-size:12px;color:#fff;font-weight:500;">需求2：打印 1-100 中的偶数</div>
<div class="a" style="left:206px;top:423px;width:219px;height:32px;border-radius:16px;background:#0a7df8"></div>
<div class="t " style="letter-spacing:0.61px;left:219.0px;top:429.0px;font-size:12px;color:#fff;font-weight:500;">需求3：计算 1-10 内数字的累加和</div>
<div class="a" style="left:625.5px;top:35px;width:5.5px;height:341px;background:rgba(150,152,156,0.6);"></div>
</div>
<div class="a" style="left:1891px;top:72px;width:29px;height:933px;background:#343a47;"></div>
<div class="a" style="left:1891px;top:200px;width:29px;height:83px;background:#2a2d36;"></div>
<svg style="left:1897px;top:86px;" width="18" height="18" viewBox="0 0 18 18" preserveAspectRatio="none"><path d="M2 12.6Q4 10.6 4 7Q4 2.4 8.4 2.4Q12.8 2.4 12.8 7Q12.8 10.6 14.8 12.6Z" fill="#b1b0c3"/><path d="M6.4 14H10.4Q10.2 16 8.4 16Q6.6 16 6.4 14Z" fill="#b1b0c3"/><circle cx="13.4" cy="3.6" r="3" fill="#3d8bf2"/></svg>
<div class="a" style="left:1904.5px;top:108px;width:0;height:0"><div class="t" style="letter-spacing:0.34px;left:0;top:-10px;font-size:13.5px;color:#c3c7d0;transform-origin:0 10px;transform:rotate(90deg);">Notifications</div></div>
<svg style="left:1897.5px;top:214.6px;" width="15.4" height="10.4" viewBox="0 0 16 11" preserveAspectRatio="none"><path d="M0.2 5.5Q8 -4.4 15.8 5.5Q8 15.4 0.2 5.5Z" fill="#b1b0c3"/><circle cx="8" cy="5.5" r="3.3" fill="#2a2d36"/><circle cx="8" cy="5.5" r="1.6" fill="#b1b0c3"/></svg>
<div class="a" style="left:1904.5px;top:233px;width:0;height:0"><div class="t" style="letter-spacing:-0.33px;left:0;top:-10px;font-size:12.5px;color:#d0d3da;transform-origin:0 10px;transform:rotate(90deg);">预览器</div></div>
<div class="a" style="left:0px;top:668px;width:1920px;height:2px;background:#2f3440;"></div>
<div class="a" style="left:28px;top:670px;width:1863px;height:33px;background:#3e4454;"></div>
<div class="t " style="letter-spacing:-1.10px;left:36px;top:679px;font-size:15.5px;color:#d0d3da;">日志:</div>
<div class="t " style="letter-spacing:0.24px;left:93px;top:679px;font-size:16px;color:#d3d6dc;">HiLog</div>
<div class="a" style="left:78px;top:700px;width:73px;height:3px;border-radius:2px;background:#6f7584"></div>
<div class="t " style="letter-spacing:0.09px;left:166px;top:679px;font-size:16px;color:#d3d6dc;">FaultLog</div>
<svg style="left:1834.8px;top:677.8px;" width="16.4" height="16.4" viewBox="0 0 16.4 16.4" preserveAspectRatio="none"><g transform="translate(8.2,8.2)"><path d="M-2.30 -5.44 L-2.03 -7.95 L2.03 -7.95 L2.30 -5.44 L3.56 -4.71 L5.87 -5.73 L7.89 -2.22 L5.86 -0.73 L5.86 0.73 L7.89 2.22 L5.87 5.73 L3.56 4.71 L2.30 5.44 L2.03 7.95 L-2.03 7.95 L-2.30 5.44 L-3.56 4.71 L-5.87 5.73 L-7.89 2.22 L-5.86 0.73 L-5.86 -0.73 L-7.89 -2.22 L-5.87 -5.73 L-3.56 -4.71Z" fill="#b1b0c3" stroke="#b1b0c3" stroke-width="0.8" stroke-linejoin="round"/><circle r="2.71" fill="#3e4454"/></g></svg>
<div class="a" style="left:1867px;top:685px;width:16px;height:2px;background:#b1b0c3;"></div>
<div class="a" style="left:28px;top:703px;width:1862px;height:33px;background:#343a47;"></div>
<div class="a" style="left:28px;top:735px;width:1862px;height:1px;background:#313854;"></div>
<svg style="left:40px;top:712px;" width="15" height="15" viewBox="0 0 15 15" preserveAspectRatio="none"><path d="M7.5 0V15M0 7.5H15" stroke="#b1b0c3" stroke-width="2" fill="none"/></svg>
<div class="t " style="letter-spacing:0.00px;left:65px;top:710px;font-size:15px;color:#c3c7d0;">新增</div>
<svg style="left:116px;top:712px;" width="15" height="15" viewBox="0 0 15 15" preserveAspectRatio="none"><rect x="0" y="0" width="6.2" height="6.2" rx="0.8" fill="#b1b0c3"/><rect x="8.4" y="0" width="6.2" height="6.2" rx="0.8" fill="#b1b0c3"/><rect x="0" y="8.4" width="6.2" height="6.2" rx="0.8" fill="#b1b0c3"/><rect x="8.4" y="8.4" width="6.2" height="6.2" rx="0.8" fill="#b1b0c3"/></svg>
<div class="t " style="letter-spacing:0.00px;left:141px;top:710px;font-size:15px;color:#c3c7d0;">布局</div>
<svg style="left:192.1px;top:710.6px;" width="16.8" height="16.8" viewBox="0 0 16.8 16.8" preserveAspectRatio="none"><g transform="translate(8.4,8.4)"><path d="M-2.36 -5.57 L-2.08 -8.14 L2.08 -8.14 L2.36 -5.57 L3.65 -4.82 L6.01 -5.87 L8.09 -2.27 L6.00 -0.75 L6.00 0.75 L8.09 2.27 L6.01 5.87 L3.65 4.82 L2.36 5.57 L2.08 8.14 L-2.08 8.14 L-2.36 5.57 L-3.65 4.82 L-6.01 5.87 L-8.09 2.27 L-6.00 0.75 L-6.00 -0.75 L-8.09 -2.27 L-6.01 -5.87 L-3.65 -4.82Z" fill="#b1b0c3" stroke="#b1b0c3" stroke-width="0.8" stroke-linejoin="round"/><circle r="2.77" fill="#343a47"/></g></svg>
<div class="t " style="letter-spacing:0.00px;left:218px;top:710px;font-size:15px;color:#c3c7d0;">设置</div>
<div class="a" style="left:28px;top:736px;width:1862px;height:55px;background:#343a47;"></div>
<div class="a" style="left:39px;top:748px;width:351px;height:32px;border:1px solid #5b6372;border-radius:3px;background:#33424c"></div>
<svg style="left:369px;top:761px;" width="12" height="8" viewBox="0 0 12 8" preserveAspectRatio="none"><path d="M0 0H11L5.5 6.6Z" fill="#a9afc2"/></svg>
<svg style="left:53px;top:755px;" width="12" height="18" viewBox="0 0 12 18" preserveAspectRatio="none"><rect x="1" y="1" width="9.6" height="15.6" rx="2" fill="none" stroke="#b1b0c3" stroke-width="2"/><rect x="1" y="1" width="9.6" height="2.4" fill="#b1b0c3"/><rect x="1" y="13.6" width="9.6" height="3" fill="#b1b0c3"/></svg>
<div class="t " style="letter-spacing:0.50px;left:76px;top:755px;font-size:16px;color:#d3d6dc;">phone</div>
<div class="a" style="left:405px;top:748px;width:257px;height:32px;border:1px solid #5b6372;border-radius:3px;background:#33424c"></div>
<svg style="left:641px;top:761px;" width="12" height="8" viewBox="0 0 12 8" preserveAspectRatio="none"><path d="M0 0H11L5.5 6.6Z" fill="#a9afc2"/></svg>
<div class="t " style="letter-spacing:0.39px;left:413px;top:755px;font-size:16px;color:#d3d6dc;">No filters</div>
<div class="a" style="left:677px;top:748px;width:257px;height:32px;border:1px solid #4e5360;border-radius:3px;background:#3c4044"></div>
<svg style="left:913px;top:761px;" width="12" height="8" viewBox="0 0 12 8" preserveAspectRatio="none"><path d="M0 0H11L5.5 6.6Z" fill="#565a62"/></svg>
<div class="a" style="left:950px;top:748px;width:99px;height:32px;border:1px solid #5b6372;border-radius:3px;background:#33424c"></div>
<svg style="left:1028px;top:761px;" width="12" height="8" viewBox="0 0 12 8" preserveAspectRatio="none"><path d="M0 0H11L5.5 6.6Z" fill="#a9afc2"/></svg>
<div class="t " style="letter-spacing:0.33px;left:958px;top:755px;font-size:16px;color:#d3d6dc;">Verbose</div>
<div class="a" style="left:1064px;top:748px;width:731px;height:32px;border:1px solid #5d6474;border-radius:3px;background:#474d5d"></div>
<svg style="left:1070px;top:756px;" width="22" height="16" viewBox="0 0 22 16" preserveAspectRatio="none"><circle cx="7.6" cy="7.4" r="5.6" fill="none" stroke="#8f95a5" stroke-width="1.3"/><path d="M11.6 11.6L15.6 15.6" stroke="#8f95a5" stroke-width="1.4"/><path d="M15.4 6.6H20.2L17.8 9.6Z" fill="#8f95a5"/></svg>
<div class="t " style="letter-spacing:-0.73px;left:1809px;top:754px;font-size:16px;color:#8f96ae;font-weight:bold;">Cc</div>
<div class="t " style="letter-spacing:1.33px;left:1843px;top:753px;font-size:17px;color:#8f96ae;font-weight:bold;">.*</div>
<div class="a" style="left:28px;top:791px;width:36px;height:184px;background:#343a47;"></div>
<svg style="left:38px;top:806px;" width="14" height="9" viewBox="0 0 14 9" preserveAspectRatio="none"><path d="M0 8.4H14L7 1Z" fill="#b1b0c3"/></svg>
<svg style="left:38px;top:838px;" width="14" height="9" viewBox="0 0 14 9" preserveAspectRatio="none"><path d="M0 0.6H14L7 8Z" fill="#b1b0c3"/></svg>
<svg style="left:37px;top:868px;" width="17" height="17" viewBox="0 0 17 17" preserveAspectRatio="none"><path d="M0.6 1H15M0.6 7H12.6Q15.6 7 15.6 10Q15.6 13 12.6 13H8" stroke="#b1b0c3" stroke-width="1.7" fill="none"/><path d="M0.6 13H3.6" stroke="#b1b0c3" stroke-width="1.7"/><path d="M9.6 9.4L6 13L9.6 16.6" stroke="#b1b0c3" stroke-width="1.7" fill="none"/></svg>
<div class="a" style="left:31px;top:893px;width:28px;height:28px;background:#3f4553;"></div>
<svg style="left:37px;top:899px;" width="17" height="17" viewBox="0 0 17 17" preserveAspectRatio="none"><path d="M0.6 3.6H5.6M0.6 8.6H5.6M0.6 14.4H15.6" stroke="#b1b0c3" stroke-width="1.8"/><path d="M11 0.6V9.6M7.4 6.4L11 10.2L14.6 6.4" stroke="#b1b0c3" stroke-width="1.8" fill="none"/></svg>
<svg style="left:37px;top:931px;" width="17" height="18" viewBox="0 0 17 18" preserveAspectRatio="none"><path d="M10.6 4.6H7.6A5.6 5.6 0 0 0 7.6 15.8" stroke="#27b563" stroke-width="2.4" fill="none"/><path d="M9.8 0.4L14.8 4.6L9.8 8.8Z" fill="#27b563"/><rect x="9.6" y="10.8" width="6" height="6" fill="#b1b0c3"/></svg>
<svg style="left:41px;top:957px;" width="11" height="9" viewBox="0 0 11 9" preserveAspectRatio="none"><path d="M1 0.6L4.6 4.5L1 8.4M6 0.6L9.6 4.5L6 8.4" stroke="#a3a6b4" stroke-width="1.2" fill="none"/></svg>
<div class="clip" style="left:64px;top:791px;width:1826px;height:184px;background:#323744">
<div class="a" style="left:703px;top:0px;width:30px;height:151px;background:#678a57;"></div>
<div class="t m" style="left:13px;top:-3.5px;font-size:16.67px;line-height:22px;height:22px;color:#c2c6cd;white-space:pre;">06-12 11:04:05.389  5276-17148   A0c0d0/JSApp</div>
<div class="t m" style="left:713px;top:-3.5px;font-size:16.67px;line-height:22px;height:22px;color:#eef2ea;white-space:pre;">I</div>
<div class="t m" style="left:743px;top:-3.5px;font-size:16.67px;line-height:22px;height:22px;color:#c2c6cd;white-space:pre;">app Log: 94</div>
<div class="t m" style="left:13px;top:28.5px;font-size:16.67px;line-height:22px;height:22px;color:#c2c6cd;white-space:pre;">06-12 11:04:05.389  5276-17148   A0c0d0/JSApp</div>
<div class="t m" style="left:713px;top:28.5px;font-size:16.67px;line-height:22px;height:22px;color:#eef2ea;white-space:pre;">I</div>
<div class="t m" style="left:743px;top:28.5px;font-size:16.67px;line-height:22px;height:22px;color:#c2c6cd;white-space:pre;">app Log: 96</div>
<div class="t m" style="left:13px;top:62px;font-size:16.67px;line-height:22px;height:22px;color:#c2c6cd;white-space:pre;">06-12 11:04:05.389  5276-17148   A0c0d0/JSApp</div>
<div class="t m" style="left:713px;top:62px;font-size:16.67px;line-height:22px;height:22px;color:#eef2ea;white-space:pre;">I</div>
<div class="t m" style="left:743px;top:62px;font-size:16.67px;line-height:22px;height:22px;color:#c2c6cd;white-space:pre;">app Log: 98</div>
<div class="t m" style="left:13px;top:93.5px;font-size:16.67px;line-height:22px;height:22px;color:#c2c6cd;white-space:pre;">06-12 11:04:05.389  5276-17148   A0c0d0/JSApp</div>
<div class="t m" style="left:713px;top:93.5px;font-size:16.67px;line-height:22px;height:22px;color:#eef2ea;white-space:pre;">I</div>
<div class="t m" style="left:743px;top:93.5px;font-size:16.67px;line-height:22px;height:22px;color:#c2c6cd;white-space:pre;">app Log: 100</div>
<div class="t m" style="left:13px;top:127px;font-size:16.67px;line-height:22px;height:22px;color:#c2c6cd;white-space:pre;">06-12 11:04:06.463  5276-17148   A0c0d0/JSApp</div>
<div class="t m" style="left:713px;top:127px;font-size:16.67px;line-height:22px;height:22px;color:#eef2ea;white-space:pre;">I</div>
<div class="t m" style="left:743px;top:127px;font-size:16.67px;line-height:22px;height:22px;color:#c2c6cd;white-space:pre;">app Log: 1-10<span class="cj2">的累加和为：</span>55</div>
<div class="a" style="left:1816px;top:150px;width:10px;height:31px;background:rgba(160,166,190,0.36);"></div>
</div>
<div class="a" style="left:15px;top:826px;width:0;height:0"><div class="t" style="letter-spacing:0.00px;left:0;top:-10px;font-size:13px;color:#c3c7d0;transform-origin:0 10px;transform:rotate(-90deg);">结构</div></div>
<svg style="left:8px;top:833px;" width="13" height="13" viewBox="0 0 13 13" preserveAspectRatio="none"><rect x="6.6" y="0" width="5.2" height="5.2" fill="#9796aa"/><rect x="0" y="6.8" width="5.2" height="5.2" fill="#9796aa"/><rect x="6.6" y="6.8" width="5.2" height="5.2" fill="#9796aa"/></svg>
<div class="a" style="left:15px;top:940px;width:0;height:0"><div class="t" style="letter-spacing:-0.11px;left:0;top:-10px;font-size:14px;color:#c3c7d0;transform-origin:0 10px;transform:rotate(-90deg);">Bookmarks</div></div>
<svg style="left:8px;top:945px;" width="12" height="15" viewBox="0 0 12 15" preserveAspectRatio="none"><path d="M0.6 0H11.4V14L6 9.6L0.6 14Z" fill="#b1b0c3"/></svg>
<svg style="left:1898px;top:819px;" width="13" height="16" viewBox="0 0 13 16" preserveAspectRatio="none"><rect x="1" y="1" width="10.6" height="14" rx="1.6" fill="none" stroke="#b1b0c3" stroke-width="1.5"/><path d="M1 3.6H11.6" stroke="#b1b0c3" stroke-width="1.2"/></svg>
<div class="a" style="left:1904.5px;top:841px;width:0;height:0"><div class="t" style="letter-spacing:-0.11px;left:0;top:-10px;font-size:13.5px;color:#c3c7d0;transform-origin:0 10px;transform:rotate(90deg);">Device File Browser</div></div>
<div class="a" style="left:0px;top:975px;width:1920px;height:30px;background:#343a47;"></div>
<div class="a" style="left:418px;top:976px;width:69px;height:29px;background:#2b2f39;"></div>
<svg style="left:43px;top:983px;" width="18" height="16" viewBox="0 0 18 16" preserveAspectRatio="none"><circle cx="3.6" cy="2.6" r="2" fill="#a5a5b6"/><circle cx="3.6" cy="13.4" r="2" fill="#a5a5b6"/><circle cx="10.2" cy="5" r="2" fill="#a5a5b6"/><path d="M3.6 3V13M10.2 5.6Q10.2 9.4 3.6 10" stroke="#a5a5b6" stroke-width="1.6" fill="none"/></svg>
<div class="t " style="letter-spacing:-1.25px;left:63px;top:981px;font-size:14px;color:#c3c7d0;">版本控制</div>
<svg style="left:139px;top:983px;" width="18" height="16" viewBox="0 0 18 16" preserveAspectRatio="none"><path d="M0.6 2L11.4 8L0.6 14Z" fill="#a5a5b6"/></svg>
<div class="t " style="letter-spacing:-0.56px;left:159px;top:981px;font-size:14px;color:#c3c7d0;">Run</div>
<svg style="left:208px;top:983px;" width="18" height="16" viewBox="0 0 18 16" preserveAspectRatio="none"><path d="M0 3.4H2.4M0 8H2.4M0 12.6H2.4" stroke="#a5a5b6" stroke-width="2"/><path d="M4.4 3.4H13.4M4.4 8H13.4M4.4 12.6H13.4" stroke="#a5a5b6" stroke-width="2"/></svg>
<div class="t " style="letter-spacing:-0.30px;left:228px;top:981px;font-size:14px;color:#c3c7d0;">TODO</div>
<svg style="left:290px;top:983px;" width="18" height="16" viewBox="0 0 18 16" preserveAspectRatio="none"><circle cx="7" cy="7.4" r="6.4" fill="#a5a5b6"/><path d="M7 3.4V8.4" stroke="#343a47" stroke-width="2"/><circle cx="7" cy="10.8" r="1.1" fill="#343a47"/></svg>
<div class="t " style="letter-spacing:-1.00px;left:310px;top:981px;font-size:14px;color:#c3c7d0;">问题</div>
<svg style="left:360px;top:983px;" width="18" height="16" viewBox="0 0 18 16" preserveAspectRatio="none"><rect x="0" y="1" width="14.4" height="13" fill="#a5a5b6"/><path d="M2.6 4L6 7L2.6 10M7 11H11.6" stroke="#343a47" stroke-width="1.5" fill="none"/></svg>
<div class="t " style="letter-spacing:-1.00px;left:380px;top:981px;font-size:14px;color:#c3c7d0;">终端</div>
<svg style="left:429px;top:983px;" width="18" height="16" viewBox="0 0 18 16" preserveAspectRatio="none"><rect x="0.6" y="2.4" width="14" height="12.4" rx="1" fill="#a5a5b6"/><path d="M3.6 0.4V3M11.6 0.4V3" stroke="#a5a5b6" stroke-width="1.8"/><path d="M3 7H12.4M3 10.6H9.4" stroke="#2b2f39" stroke-width="1.5"/></svg>
<div class="t " style="letter-spacing:-1.50px;left:451px;top:981px;font-size:14px;color:#c3c7d0;">日志</div>
<svg style="left:500px;top:983px;" width="18" height="16" viewBox="0 0 18 16" preserveAspectRatio="none"><circle cx="7.4" cy="7" r="6.2" fill="none" stroke="#a5a5b6" stroke-width="2"/><path d="M12 11.6L16.4 15.6" stroke="#a5a5b6" stroke-width="2.4"/><path d="M6.2 4.8L4 7L6.2 9.2M8.6 4.8L10.8 7L8.6 9.2" stroke="#a5a5b6" stroke-width="1.3" fill="none"/></svg>
<div class="t " style="letter-spacing:-0.13px;left:523px;top:981px;font-size:14px;color:#c3c7d0;">Code Linter</div>
<svg style="left:622px;top:983px;" width="18" height="16" viewBox="0 0 18 16" preserveAspectRatio="none"><path d="M9 13.6H6.6A6.2 6.2 0 1 1 13.4 7" stroke="#a5a5b6" stroke-width="1.6" fill="none"/><path d="M7.2 3.6V7.6H4.6" stroke="#a5a5b6" stroke-width="1.4" fill="none"/><circle cx="12.8" cy="11" r="3" fill="none" stroke="#a5a5b6" stroke-width="1.5"/><path d="M15 13.4L17.4 15.8" stroke="#a5a5b6" stroke-width="1.7"/></svg>
<div class="t " style="letter-spacing:-0.04px;left:646px;top:981px;font-size:14px;color:#c3c7d0;">Profiler</div>
<svg style="left:713px;top:983px;" width="18" height="16" viewBox="0 0 18 16" preserveAspectRatio="none"><path d="M4 0.8H11L14.6 7.6L11 14.4H4L0.4 7.6Z" fill="#a5a5b6"/><path d="M5.6 4.4L10.4 7.6L5.6 10.8Z" fill="#343a47"/></svg>
<div class="t " style="letter-spacing:-1.00px;left:734px;top:981px;font-size:14px;color:#c3c7d0;">服务</div>
<svg style="left:787px;top:983px;" width="18" height="16" viewBox="0 0 18 16" preserveAspectRatio="none"><rect x="0" y="1" width="16" height="3.6" fill="#a5a5b6"/><rect x="0" y="6" width="4.6" height="9" fill="#a5a5b6"/><rect x="6" y="6" width="10" height="3.6" fill="#a5a5b6"/><rect x="6" y="11.4" width="10" height="3.6" fill="#a5a5b6"/></svg>
<div class="t " style="letter-spacing:0.03px;left:809px;top:981px;font-size:14px;color:#c3c7d0;">ArkUI Inspector</div>
<svg style="left:936px;top:983px;" width="18" height="16" viewBox="0 0 18 16" preserveAspectRatio="none"><rect x="1" y="2" width="12" height="13" rx="1" fill="none" stroke="#8d92a0" stroke-width="1.3"/><path d="M4 0.6V3.4M7 0.6V3.4M10 0.6V3.4" stroke="#8d92a0" stroke-width="1.2"/><path d="M3.6 6.6H10.4M3.6 9.4H10.4M3.6 12.2H8" stroke="#8d92a0" stroke-width="1.1"/></svg>
<div class="t " style="letter-spacing:-1.00px;left:956px;top:981px;font-size:14px;color:#c3c7d0;">预览器日志</div>
<div class="a" style="left:0px;top:1005px;width:1920px;height:25px;background:#343a47;"></div>
<svg style="left:8px;top:1010px;" width="15" height="15" viewBox="0 0 15 15" preserveAspectRatio="none"><rect x="3" y="0.6" width="11" height="11" fill="none" stroke="#8d92a0" stroke-width="1.2"/><path d="M0.6 3.4V14H11.6" stroke="#8d92a0" stroke-width="1.2" fill="none"/></svg>
<div class="t " style="letter-spacing:0.06px;left:34px;top:1008px;font-size:16px;color:#c3c7d0;">Sync project finished in 3 s 613 ms (5 minutes ago)</div>
<div class="a" style="left:1627px;top:1010px;width:15px;height:15px;border-radius:8px;background:#2aa336"></div>
<div class="t " style="letter-spacing:-0.04px;left:1658px;top:1008px;font-size:16px;color:#c3c7d0;">35:9</div>
<div class="t " style="letter-spacing:-1.45px;left:1704px;top:1008px;font-size:16px;color:#c3c7d0;">CRLF</div>
<div class="t " style="letter-spacing:-0.47px;left:1755px;top:1008px;font-size:16px;color:#c3c7d0;">UTF-8</div>
<div class="t " style="letter-spacing:-0.26px;left:1813px;top:1008px;font-size:16px;color:#c3c7d0;">2 spaces</div>
<svg style="left:1888px;top:1009px;" width="16" height="16" viewBox="0 0 16 16" preserveAspectRatio="none"><rect x="5" y="7.4" width="10" height="7.6" fill="#b1b0c3"/><path d="M2 7V4.6Q2 1.6 4.6 1.6Q7.2 1.6 7.2 4.6V7.4" stroke="#b1b0c3" stroke-width="1.7" fill="none"/></svg>
</body></html>
